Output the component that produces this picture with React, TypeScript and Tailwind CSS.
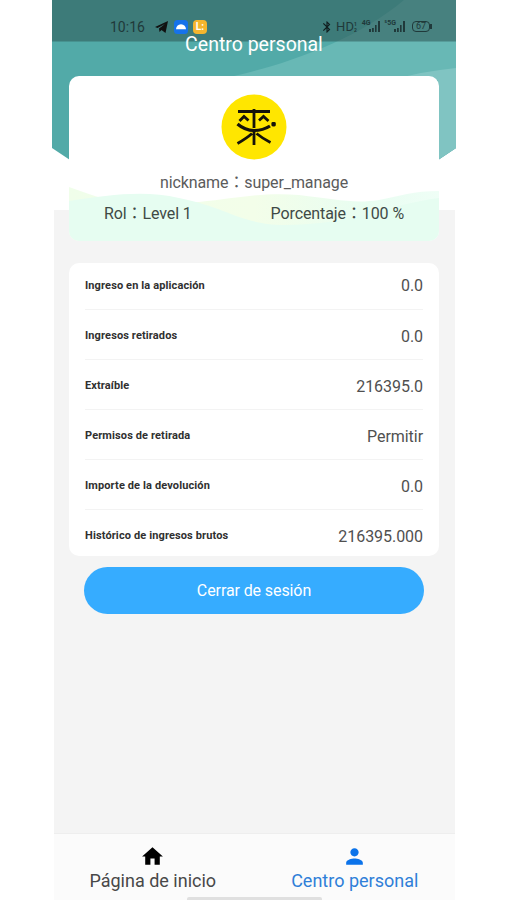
import { MdBluetooth, MdHome, MdPerson } from "react-icons/md";

const rows = [
  { label: "Ingreso en la aplicación", value: "0.0" },
  { label: "Ingresos retirados", value: "0.0" },
  { label: "Extraíble", value: "216395.0" },
  { label: "Permisos de retirada", value: "Permitir" },
  { label: "Importe de la devolución", value: "0.0" },
  { label: "Histórico de ingresos brutos", value: "216395.000" },
];

function HeaderBackground() {
  return (
    <svg className="col-start-1 row-start-1 block" width="404" height="210" viewBox="0 0 404 210">
      <path d="M0 0H404V148Q386 160 386 160H18L0 148Z" fill="#52aaa8" />
      <path d="M404 0V148L386 160V100H120L182 76C235 64 305 40 352 0Z" fill="#68b8b5" />
      <path d="M404 68V148L386 160V80H340Q372 71 404 68Z" fill="#80c4c2" />
      <path d="M0 0H404V41.5H0Z" fill="#2d5451" fillOpacity=".54" />
    </svg>
  );
}

function Avatar() {
  return (
    <svg className="block" width="66" height="66" viewBox="0 0 66 66">
      <circle cx="33" cy="33" r="32.5" fill="#ffe600" />
      <g fill="none" stroke="#15130a" strokeWidth="2.8">
        <path d="M17 17.5H49M33 15V34M18.5 27L23 22.5L27.5 26.5M38 26.5L42.5 22.5L47.5 27" />
        <path d="M16.5 30Q24 36.5 33 36.5Q42 36.5 49 32" strokeWidth="3.2" />
        <path d="M33 37V51M31 39.5Q26 44 16.5 49.5M35.5 39.5Q41 44 49.5 48.5" />
      </g>
      <rect x="50.4" y="28" width="4.4" height="4.4" rx="1.4" fill="#15130a" />
    </svg>
  );
}

function Signal() {
  return (
    <svg width="11" height="11" viewBox="0 0 11 11" fill="currentColor">
      <path d="M0 8h2v3H0zM3 7h1.8v4H3zM6 4h1.6v7H6zM9 0h2v11H9z" />
    </svg>
  );
}

function StatusBar() {
  return (
    <div className="flex h-[36px] items-center pt-[17px] pl-[58px] pr-[24px] text-[#20393a]">
      <span className="text-[14px] leading-none">10:16</span>
      <svg className="ml-[10px]" width="13" height="12" viewBox="0 0 13 12" fill="#111">
        <path d="M0 6L13 0L10.5 12L6.5 9L4.5 11L4 7.5L10 3L2.5 7Z" />
      </svg>
      <svg className="ml-[6px]" width="14" height="14" viewBox="0 0 14 14">
        <rect width="14" height="14" rx="3.5" fill="#1672ea" />
        <path d="M2 9.3C2 6.5 4 4.5 7 4.2C10 4.5 12 6.5 12 9.3Z" fill="#fff" />
      </svg>
      <span className="ml-[5px] flex size-[14px] items-center justify-center rounded-[4px] bg-[#f5b52e] text-[10px] font-bold leading-none text-white">
        L:
      </span>
      <div className="ml-auto flex items-center">
        <MdBluetooth size={14} color="#111f20" />
        <span className="ml-[2px] text-[13px] leading-none">HD</span>
        <span className="flex flex-col text-[5px] font-bold leading-[6px]">
          <span>1</span>
          <span>2</span>
        </span>
        <span className="ml-[5px] mb-[6px] text-[7px] font-bold leading-none">4G</span>
        <span className="-ml-[2px]"><Signal /></span>
        <span className="ml-[5px] mb-[6px] text-[7px] font-bold leading-none">⁵5G</span>
        <span className="-ml-[2px]"><Signal /></span>
        <span className="ml-[7px] flex h-[11px] w-[18px] items-center justify-center rounded-[4px] border border-current text-[9px] leading-none">
          67
        </span>
        <span className="h-[5px] w-[2px] bg-current" />
      </div>
    </div>
  );
}

function ProfileCard() {
  return (
    <section className="mx-[17px] grid h-[165px] w-[370px] overflow-hidden rounded-[10px] bg-white">
      <svg className="col-start-1 row-start-1 block" width="370" height="165" viewBox="0 0 370 165">
        <defs>
          <linearGradient id="hill" x1="0" x2="1" y1="0" y2="0">
            <stop offset="0" stopColor="#f0feea" />
            <stop offset=".5" stopColor="#f3fee9" />
            <stop offset=".8" stopColor="#e8fdf1" />
            <stop offset="1" stopColor="#effef6" />
          </linearGradient>
        </defs>
        <path d="M0 111C14 116 28 121 45 126L130 126C170 122 195 116 230 119C265 123 285 128 310 124C330 120 345 115 370 115V165H0Z" fill="url(#hill)" />
        <path d="M0 125C40 119 75 114 110 122C160 132 170 148 215 149C285 149 320 128 370 122V165H0Z" fill="#e6fdf1" />
      </svg>
      <div className="col-start-1 row-start-1 flex flex-col items-center pt-[18px]">
        <Avatar />
        <p className="mt-[13px] text-[16px] leading-[20px] tracking-[-0.1px] text-[#5b5b5b]">nickname：super_manage</p>
        <div className="mt-[11px] flex w-full justify-between px-[35px] text-[16px] leading-[20px] tracking-[-0.1px] text-[#3f4a46]">
          <span>Rol：Level 1</span>
          <span>Porcentaje：100 %</span>
        </div>
      </div>
    </section>
  );
}

export default function App() {
  return (
    <div className="flex h-[900px] w-[506px] flex-col overflow-hidden bg-white pl-[52px] font-['Roboto','Noto_Sans_CJK_TC',sans-serif]">
      <div className="grid h-[900px] w-[404px] grid-cols-1 content-start bg-[linear-gradient(#f4f4f4,#f4f4f4)] bg-[length:401px_690px] bg-[position:2px_210px] bg-no-repeat">
        <HeaderBackground />
        <div className="col-start-1 row-start-1 flex h-[900px] flex-col">
          <StatusBar />
          <h1 className="h-[40px] text-center text-[19.5px] leading-[18px] text-white">Centro personal</h1>
          <ProfileCard />

          <section className="mx-[17px] mt-[22px] h-[293px] w-[370px] overflow-hidden rounded-[10px] bg-white px-[16px]">
            {rows.map((row) => (
              <div
                key={row.label}
                className="flex h-[50px] items-center justify-between border-b border-[#f3f3f3] pt-[4px] first:h-[47px] first:pt-0 last:border-b-0 last:pt-[3px]"
              >
                <span className="text-[11px] font-bold tracking-[0.12px] text-[#303030]">{row.label}</span>
                <span className="text-[16px] tracking-[-0.05px] text-[#505050]">{row.value}</span>
              </div>
            ))}
          </section>

          <button className="ml-[32px] mt-[11px] h-[47px] w-[340px] rounded-full bg-[#36acff] text-[16px] tracking-[-0.1px] text-white">
            Cerrar de sesión
          </button>

          <nav className="ml-[2px] mt-auto grid h-[67px] w-[401px] grid-cols-2 border-t border-[#eeeeee] bg-[#fbfbfb] text-[18px] leading-[22px]">
            <a className="flex flex-col items-center pt-[10px] pr-[3px] text-[#484848]">
              <MdHome size={25} color="#000" />
              <span className="mt-px">Página de inicio</span>
            </a>
            <a className="flex flex-col items-center pt-[10px] text-[#2f7fd8]">
              <MdPerson size={25} color="#0b73ea" />
              <span className="mt-px">Centro personal</span>
            </a>
            <span className="col-span-2 h-[3px] w-[135px] justify-self-center self-end rounded-t-[2px] bg-[#e0e0e0]" />
          </nav>
        </div>
      </div>
    </div>
  );
}
